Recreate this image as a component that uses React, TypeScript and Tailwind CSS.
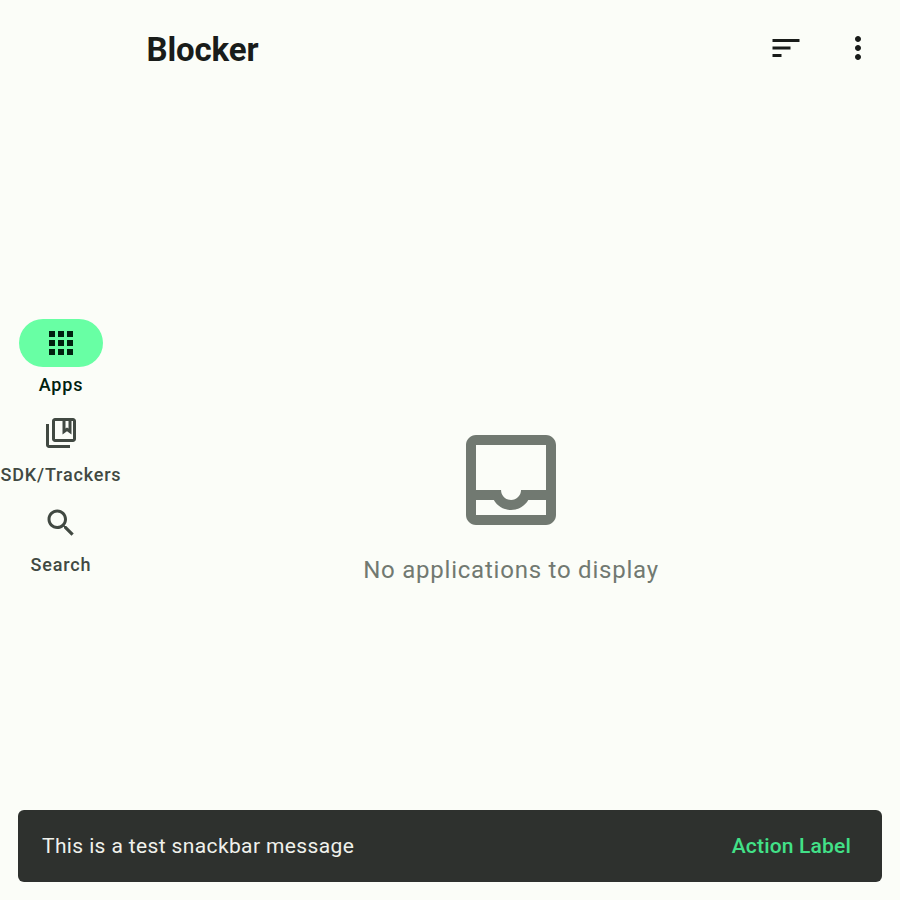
import React from "react";

function Icon({ d, className }: { d: string; className: string }) {
  return (
    <svg viewBox="0 0 24 24" fill="currentColor" className={`block shrink-0 ${className}`} aria-hidden="true">
      <path fillRule="evenodd" d={d} />
    </svg>
  );
}

const icons = {
  sort: "M3 18h6v-2H3v2zM3 6v2h18V6H3zm0 7h12v-2H3v2z",
  more: "M12 8c1.1 0 2-.9 2-2s-.9-2-2-2-2 .9-2 2 .9 2 2 2zm0 2c-1.1 0-2 .9-2 2s.9 2 2 2 2-.9 2-2-.9-2-2-2zm0 6c-1.1 0-2 .9-2 2s.9 2 2 2 2-.9 2-2-.9-2-2-2z",
  apps: "M4 8h4V4H4v4zm6 12h4v-4h-4v4zm-6 0h4v-4H4v4zm0-6h4v-4H4v4zm6 0h4v-4h-4v4zm6-10v4h4V4h-4zm-6 4h4V4h-4v4zm6 6h4v-4h-4v4zm0 6h4v-4h-4v4z",
  bookmarks:
    "M4 6H2v14c0 1.1.9 2 2 2h14v-2H4V6zM20 2H8c-1.1 0-2 .9-2 2v12c0 1.1.9 2 2 2h12c1.1 0 2-.9 2-2V4c0-1.1-.9-2-2-2zm-5 2h2v5l-1-.75L15 9V4zm5 12H8V4h5v9l3-2.25L19 13V4h1v12z",
  search:
    "M15.5 14h-.79l-.28-.27C15.41 12.59 16 11.11 16 9.5 16 5.91 13.09 3 9.5 3S3 5.91 3 9.5 5.91 16 9.5 16c1.61 0 3.09-.59 4.23-1.57l.27.28v.79l5 4.99L20.49 19l-4.99-5zm-6 0C7.01 14 5 11.99 5 9.5S7.01 5 9.5 5 14 7.01 14 9.5 11.99 14 9.5 14z",
  inbox:
    "M19 3H5c-1.1 0-2 .9-2 2v14c0 1.1.9 2 2 2h14c1.1 0 2-.9 2-2V5c0-1.1-.9-2-2-2zm0 16H5v-3h3.56c.69 1.19 1.97 2 3.45 2s2.75-.81 3.45-2H19v3zm0-5h-4.99c0 1.1-.9 2-2 2s-2-.9-2-2H5V5h14v9z",
};

function RailItem({ icon, label, active = false }: { icon: string; label: string; active?: boolean }) {
  return (
    <button className={`flex h-[90px] w-full flex-col items-center ${active ? "text-[#00210f]" : "text-[#414942]"}`}>
      <span className={`flex h-12 w-[84px] items-center justify-center rounded-full ${active ? "bg-[#68ffa4]" : ""}`}>
        <Icon d={icon} className="size-9" />
      </span>
      <span className="mt-1.5 whitespace-nowrap text-[18px] leading-6 font-medium tracking-[0.82px]">{label}</span>
    </button>
  );
}

export default function App() {
  return (
    <div className="flex h-[900px] w-[900px] flex-col overflow-hidden bg-[#fbfdf8] font-['Roboto',sans-serif] text-[#191c1a]">
      <div className="flex h-[810px]">
        <nav className="flex w-[122px] shrink-0 flex-col pt-[319px]">
          <RailItem icon={icons.apps} label="Apps" active />
          <RailItem icon={icons.bookmarks} label="SDK/Trackers" />
          <RailItem icon={icons.search} label="Search" />
        </nav>
        <main className="flex grow flex-col">
          <header className="flex h-24 items-center justify-between pr-6 pl-[24.5px]">
            <h1 className="pt-1 text-[33px] leading-[42px] font-bold tracking-[-0.13px]">Blocker</h1>
            <div className="flex gap-9">
              <button><Icon d={icons.sort} className="size-9" /></button>
              <button><Icon d={icons.more} className="size-9" /></button>
            </div>
          </header>
          <section className="flex flex-col items-center pt-[324px] text-[#717971]">
            <Icon d={icons.inbox} className="size-[120px]" />
            <p className="mt-3 text-[24px] leading-9 tracking-[0.77px]">No applications to display</p>
          </section>
        </main>
      </div>
      <div className="mx-[18px] flex h-[72px] items-center justify-between rounded-md bg-[#2e312e] pr-[31px] pl-6 text-[21px] leading-[30px]">
        <span className="tracking-[0.375px] text-[#f0f1ec]">This is a test snackbar message</span>
        <button className="font-medium tracking-[0.18px] text-[#42e188]">Action Label</button>
      </div>
    </div>
  );
}
